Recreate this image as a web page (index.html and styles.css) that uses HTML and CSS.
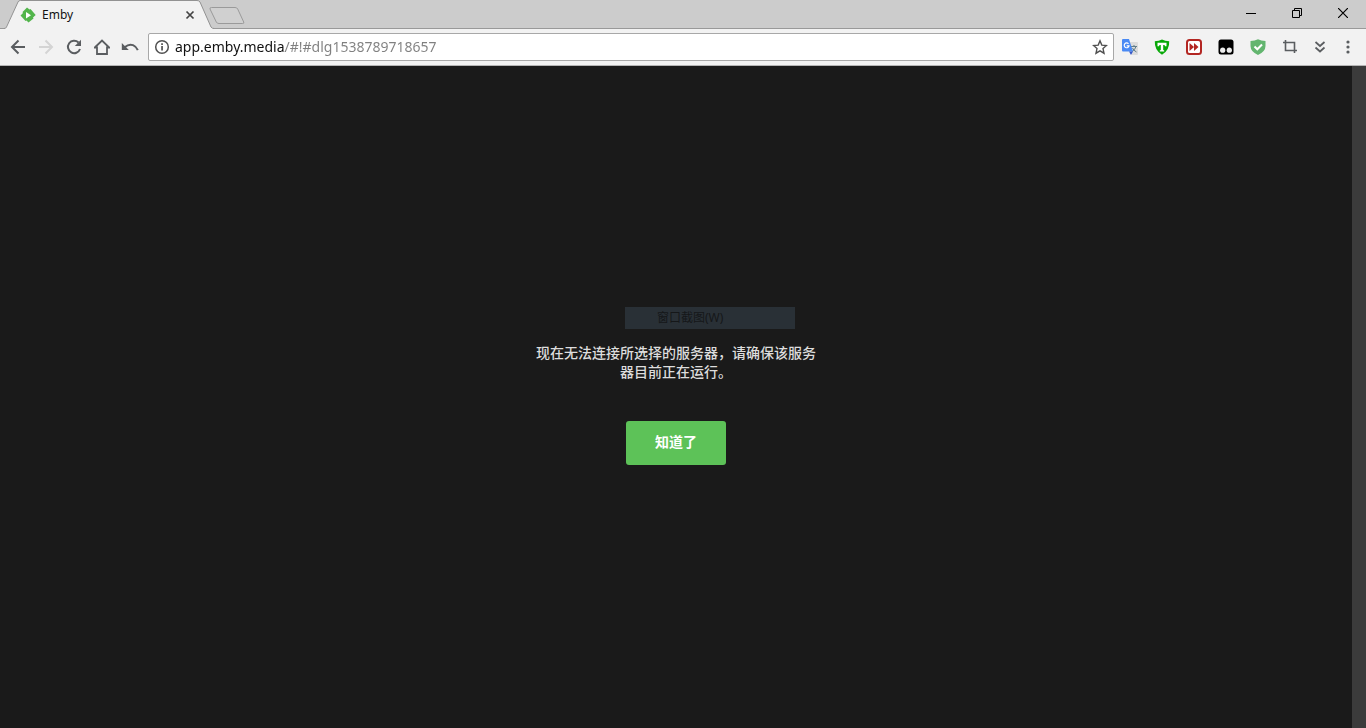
FILE: index.html
```html
<!DOCTYPE html>
<html lang="zh-CN">
<head>
<meta charset="utf-8">
<title>Emby</title>
<link rel="stylesheet" href="styles.css">
</head>
<body>
<header class="tabstrip">
  <div class="tab">
    <svg class="tab-shape" viewBox="0 0 210 29" preserveAspectRatio="none" aria-hidden="true"><path d="M0 29 L2 27.500 L14 2 Q14.500 .5 16.500 .5 H193 Q195 .5 196 2 L207 27 L210 29Z" fill="#f2f2f2"/><path d="M0 28.500 Q2 28.500 2.500 27 L14 2 Q14.500 .5 16.500 .5 H193 Q195 .5 196 2 L207 27 Q208 28.500 210 28.500" fill="none" stroke="#929292"/></svg>
    <svg class="icon" width="16" height="16" viewBox="0 0 16 16" aria-hidden="true"><path d="M7 .5 9.500 2.500 10.500 2 15.700 8 13 10.500 13.500 11.500 8.500 15.500 6.500 13.500 5.500 14 .5 8.500 3 6 2.500 5Z" fill="#52b54b"/><path d="M6 5v6.500l5-3.300Z" fill="#fff"/></svg>
    <span class="tab-title">Emby</span>
    <button class="tab-close" aria-label="关闭标签页"><svg width="10" height="10" viewBox="0 0 10 10"><path d="m1.500 1.500 7 7m0-7-7 7" stroke="#444" stroke-width="1.700"/></svg></button>
  </div>
  <button class="new-tab" aria-label="新标签页"><svg width="36" height="18" viewBox="0 0 36 18"><path d="M2.500 .5H26q2 0 2.700 1.500l6 13q.7 1.500-1 1.500H10q-2 0-2.700-1.500L1 2Q.5.5 2.500.5Z" fill="#d0d0d0" stroke="#9a9a9a"/></svg></button>
  <div class="window-controls">
    <button class="window-button" aria-label="最小化"><svg width="10" height="10" viewBox="0 0 10 10"><path d="M0 5.500h10" stroke="#000"/></svg></button>
    <button class="window-button" aria-label="还原"><svg width="10" height="10" viewBox="0 0 10 10"><path d="M.5 2.500h7v7h-7zM2.500 2V.5h7v7H8" fill="none" stroke="#000"/></svg></button>
    <button class="window-button" aria-label="关闭"><svg width="10" height="10" viewBox="0 0 10 10"><path d="m0 0 10 10M10 0 0 10" stroke="#000" stroke-width="1.200"/></svg></button>
  </div>
</header>
<nav class="toolbar">
  <div class="tools">
    <button class="tool" aria-label="后退"><svg width="16" height="16" viewBox="0 0 16 16"><path d="M15 8H2m6.500-6.500L2 8l6.500 6.500" fill="none" stroke="#5a5d60" stroke-width="2"/></svg></button>
    <button class="tool" aria-label="前进" disabled><svg width="16" height="16" viewBox="0 0 16 16"><path d="M1 8h13M7.500 1.500 14 8l-6.500 6.500" fill="none" stroke="#d4d4d4" stroke-width="2"/></svg></button>
    <button class="tool" aria-label="重新加载"><svg width="16" height="16" viewBox="0 0 16 16"><path d="M12.500 3.500A6.200 6.200 0 1 0 14 10" fill="none" stroke="#5a5d60" stroke-width="2"/><path d="M15 .8V7H8.800Z" fill="#5a5d60"/></svg></button>
    <button class="tool" aria-label="主页"><svg width="16" height="16" viewBox="0 0 16 16"><path d="M.8 8.500 8 1.500l7.200 7H13V15H3V8.500Z" fill="none" stroke="#5a5d60" stroke-width="1.800"/></svg></button>
    <button class="tool" aria-label="撤消"><svg width="18" height="16" viewBox="0 0 18 16"><path d="M.8 4v7h7Z" fill="#5a5d60"/><path d="M4 8Q8 4.500 12 6.200q3.500 1.500 4.800 5" fill="none" stroke="#5a5d60" stroke-width="2"/></svg></button>
  </div>
  <div class="omnibox">
    <button class="box-button" aria-label="查看网站信息"><svg width="16" height="16" viewBox="0 0 16 16"><circle cx="8" cy="8" r="6.300" fill="none" stroke="#505050" stroke-width="1.500"/><path d="M7.200 7h1.700v4.500H7.200zM7.200 4.300h1.700V6H7.200z" fill="#505050"/></svg></button>
    <input class="url" type="text" aria-label="地址" value="app.emby.media/#!#dlg1538789718657" spellcheck="false">
    <button class="box-button" aria-label="收藏"><svg width="16" height="16" viewBox="0 0 16 16"><path d="m8 1.800 1.800 4.300 4.700.4-3.500 3.100 1 4.600L8 11.800l-4 2.400 1-4.600-3.500-3.100 4.700-.4Z" fill="none" stroke="#505050" stroke-width="1.400"/></svg></button>
  </div>
  <div class="tools">
    <button class="tool extension" aria-label="翻译"><svg width="18" height="18" viewBox="0 0 18 18"><path d="M7 4h9q1 0 1 1v11q0 1-1 1h-5Z" fill="#dcdcdc"/><path d="M10 8.500h6M13 7v1.500m2 0q-1 3.500-4 5m.5-3.500q1 2.500 4 4" fill="none" stroke="#607d88"/><path d="M2 1h6l4 12.500H2q-1 0-1-1V2q0-1 1-1Z" fill="#4a8af4"/><path d="M8 13.500h4L10 17Z" fill="#3356c8"/><path d="M7.500 5.800A2.400 2.400 0 1 0 8 7.800H5.700" fill="none" stroke="#fff" stroke-width="1.200"/></svg></button>
    <button class="tool extension" aria-label="T 盾牌"><svg width="16" height="16" viewBox="0 0 16 16"><path d="M.8 2.200Q5 2.200 8 .5q3 1.700 7.200 1.700Q15.700 11 8 15.800.3 11 .8 2.200Z" fill="#08a808"/><path d="M3.500 3.800h9v3.400h-1.500L10.500 5.900H9.200v5.200l1 .3v1.100H5.800v-1.100l1-.3V5.900H5.500L5 7.200H3.500Z" fill="#fff"/></svg></button>
    <button class="tool extension" aria-label="快进"><svg width="16" height="16" viewBox="0 0 16 16"><rect x="1" y="1" width="14" height="14" rx="2.500" fill="#fff" stroke="#b32622" stroke-width="2"/><path d="m3.500 4 4.500 4-4.500 4Zm4.500 0 4.500 4L8 12Z" fill="#b32622"/></svg></button>
    <button class="tool extension" aria-label="脚本管理"><svg width="16" height="16" viewBox="0 0 16 16"><rect x=".5" y=".5" width="15" height="15" rx="2.500"/><circle cx="4.700" cy="11.200" r="2.600" fill="#eee"/><circle cx="11.300" cy="11.200" r="2.600" fill="#eee"/></svg></button>
    <button class="tool extension" aria-label="安全"><svg width="16" height="16" viewBox="0 0 16 16"><path d="M.5 2Q5 2 8 .3 11 2 15.500 2v5q0 5.500-7.500 9Q.5 12.500.5 7Z" fill="#63b56f"/><path d="m4.500 7.500 2.800 2.800 4.700-4.800" fill="none" stroke="#fff" stroke-width="2"/></svg></button>
    <button class="tool extension" aria-label="截图"><svg width="16" height="16" viewBox="0 0 16 16"><path d="M1 3.500h11.500V11M3.500 1v10.500H15M12.500 10v4" fill="none" stroke="#5a5d60" stroke-width="1.600"/></svg></button>
    <button class="tool" aria-label="更多扩展"><svg width="12" height="14" viewBox="0 0 12 14"><path d="m1.500 2 4.500 4 4.500-4M1.500 7.500l4.500 4 4.500-4" fill="none" stroke="#5a5d60" stroke-width="1.700"/></svg></button>
    <button class="tool" aria-label="菜单"><svg width="4" height="14" viewBox="0 0 4 14"><g fill="#5a5d60"><circle cx="2" cy="2" r="1.600"/><circle cx="2" cy="7" r="1.600"/><circle cx="2" cy="12" r="1.600"/></g></svg></button>
  </div>
</nav>
<main class="page">
  <div class="stage">
    <section class="dialog" role="alertdialog" aria-labelledby="message">
      <div class="menu-item">窗口截图(W)</div>
      <p class="message" id="message">现在无法连接所选择的服务器，请确保该服务器目前正在运行。</p>
      <button class="confirm">知道了</button>
    </section>
  </div>
  <div class="scrollbar"></div>
</main>
</body>
</html>
```
FILE: styles.css
```css
* { box-sizing: border-box; }

body {
  margin: 0;
  min-height: 100vh;
  display: flex;
  flex-direction: column;
  background: #1a1a1a;
  font-family: "Noto Sans", "Noto Sans CJK SC", sans-serif;
  font-size: 12px;
}

button {
  display: flex;
  align-items: center;
  justify-content: center;
  padding: 0;
  border: 0;
  background: none;
  font-family: inherit;
}

svg { display: block; flex: none; }

.tabstrip {
  display: flex;
  height: 29px;
  padding-left: 4px;
  background: #ccc;
  box-shadow: inset 0 -1px #999;
}

.tab {
  position: relative;
  display: flex;
  align-items: center;
  width: 210px;
  padding: 0 16px;
}

.tab-shape {
  position: absolute;
  inset: 0;
  width: 100%;
  height: 100%;
}

.icon, .tab-title, .tab-close { position: relative; }

.tab-title {
  flex: 1;
  margin-left: 6px;
  color: #111;
}

.tab-close { width: 16px; height: 16px; }

.new-tab {
  align-self: flex-start;
  margin: 7px 0 0 -5px;
  position: relative;
}

.window-controls { display: flex; margin-left: auto; }

.window-button { width: 46px; height: 26px; }

.toolbar {
  display: flex;
  align-items: center;
  height: 37px;
  padding: 0 4px;
  background: #f2f2f2;
  border-bottom: 1px solid #b5b5b5;
}

.tools { display: flex; }

.tool { width: 28px; height: 28px; }

.extension { width: 32px; }

.omnibox {
  flex: 1;
  display: flex;
  align-items: center;
  height: 28px;
  margin-left: 4px;
  background: #fff;
  border: 1px solid #a8a8a8;
  border-radius: 2px;
}

.box-button { width: 26px; height: 26px; }

/* The host name is black, the rest of the address grey. */
.url {
  flex: 1;
  min-width: 0;
  height: 24px;
  padding: 0 0 2px;
  border: 0;
  outline: 0;
  font-family: "Noto Sans", sans-serif;
  font-size: 14px;
  color: transparent;
  background: linear-gradient(90deg, #111 110px, #808080 110px);
  -webkit-background-clip: text;
  background-clip: text;
}

.page { flex: 1; display: flex; }

.stage {
  flex: 1;
  display: flex;
  align-items: center;
  justify-content: center;
}

.scrollbar { width: 14px; background: #3b3b3b; }

.dialog {
  position: relative;
  display: flex;
  flex-direction: column;
  align-items: center;
  gap: 40px;
  width: 288px;
  padding-top: 14px;
}

.menu-item {
  position: absolute;
  bottom: 100%;
  left: 93px;
  width: 170px;
  padding-left: 32px;
  background: #293036;
  color: #151719;
  line-height: 22px;
}

.message {
  margin: 0;
  color: #ddd;
  font-size: 14px;
  font-weight: 500;
  line-height: 19px;
  text-align: center;
}

.confirm {
  width: 100px;
  height: 44px;
  padding-bottom: 4px;
  border-radius: 3px;
  background: #5dc258;
  color: #fff;
  font-size: 14px;
  font-weight: 700;
}
```
